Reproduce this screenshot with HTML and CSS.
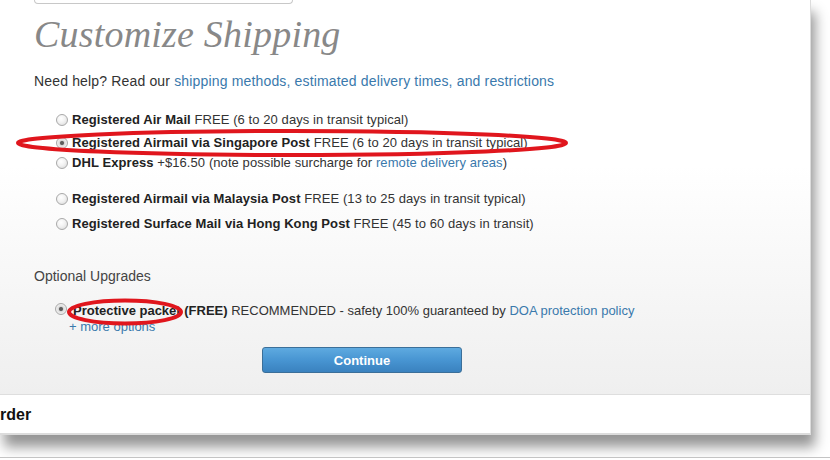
FILE: index.html
```html
<!DOCTYPE html>
<html>
<head>
<meta charset="utf-8">
<link rel="stylesheet" href="styles.css">
</head>
<body>
<div class="page">
  <div class="panel">
    <div class="main">
      <div class="topbox"></div>
      <h1 class="title">Customize Shipping</h1>
      <p class="help">Need help? Read our <a class="link" href="#">shipping methods, estimated delivery times, and restrictions</a></p>
      <div class="options">
        <label class="opt r1"><input type="radio" name="ship"><span><b>Registered Air Mail</b> FREE (6 to 20 days in transit typical)</span></label>
        <label class="opt r2"><input type="radio" name="ship" checked><span><b>Registered Airmail via Singapore Post</b> FREE (6 to 20 days in transit typical)</span></label>
        <label class="opt r3"><input type="radio" name="ship"><span><b>DHL Express</b> +$16.50 (note possible surcharge for <a class="link" href="#">remote delivery areas</a>)</span></label>
        <label class="opt r4"><input type="radio" name="ship"><span><b>Registered Airmail via Malaysia Post</b> FREE (13 to 25 days in transit typical)</span></label>
        <label class="opt r5"><input type="radio" name="ship"><span><b>Registered Surface Mail via Hong Kong Post</b> FREE (45 to 60 days in transit)</span></label>
      </div>
      <p class="subhead">Optional Upgrades</p>
      <div class="upgrade">
        <label class="opt up"><input type="radio" name="up" checked><span><b>Protective packet (FREE)</b> RECOMMENDED - safety 100% guaranteed by <a class="link" href="#">DOA protection policy</a></span></label>
        <a class="more link" href="#">+ more options</a>
      </div>
      <button class="btn" type="button">Continue</button>
    </div>
    <div class="footer">rder</div>
  </div>
  <svg class="mark mark1" width="570" height="40" viewBox="0 0 570 40"><ellipse cx="292" cy="19" rx="274" ry="12" fill="none" stroke="#e0161d" stroke-width="4"/></svg>
  <svg class="mark mark2" width="130" height="34" viewBox="0 0 130 34"><ellipse cx="65" cy="17" rx="56" ry="11.5" fill="none" stroke="#e0161d" stroke-width="4"/></svg>
</div>
</body>
</html>
```

FILE: styles.css
```css
html, body {
  margin: 0;
  padding: 0;
  background: #fff;
}
body {
  font-family: "Liberation Sans", Arial, sans-serif;
  color: #333;
}
.page {
  position: relative;
  width: 830px;
  height: 457px;
  border-bottom: 1px solid #c4c4c4;
  overflow: hidden;
}
.panel {
  width: 811px;
  box-sizing: border-box;
  border-right: 1px solid #dcdcdc;
  border-bottom: 2px solid #dcdcdc;
  background: #fff;
  box-shadow: 4px 12px 12px rgba(0, 0, 0, 0.42);
}
.main {
  padding: 0 0 21px 34px;
  border-bottom: 1px solid #dedede;
  background: linear-gradient(to bottom, #ffffff 0%, #ffffff 42%, #efefef 100%);
}
.topbox {
  width: 257px;
  height: 3px;
  border: 1px solid #c8c8c8;
  border-top: none;
  border-radius: 0 0 5px 5px;
}
.title {
  margin: 10px 0 0;
  font-family: "Liberation Serif", Georgia, serif;
  font-style: italic;
  font-weight: normal;
  font-size: 38px;
  line-height: 40px;
  color: #888;
  letter-spacing: 0.2px;
}
.help {
  margin: 18px 0 0;
  font-size: 14px;
  line-height: 18px;
  letter-spacing: 0.16px;
}
.link {
  color: #3a79ac;
  text-decoration: none;
}
.options {
  margin-top: 20px;
  padding-left: 22px;
}
.opt {
  display: flex;
  align-items: center;
  font-size: 13px;
  line-height: 20px;
  letter-spacing: 0.08px;
}
.opt b {
  font-weight: bold;
  color: #222;
}
.opt input {
  appearance: none;
  -webkit-appearance: none;
  width: 12px;
  height: 12px;
  margin: 0 4px 0 0;
  border: 1px solid #a9a9a9;
  border-radius: 50%;
  background: radial-gradient(circle at 40% 35%, #ffffff 0%, #f2f2f2 45%, #d6d6d6 100%);
  box-sizing: border-box;
  flex: none;
  position: relative;
}
.opt input:checked {
  background: radial-gradient(circle at 50% 50%, #555 0, #666 1.6px, #dcdcdc 2.6px, #f0f0f0 70%, #d4d4d4 100%);
}
.r2 { margin-top: 3px; }
.r4 { margin-top: 16px; }
.r5 { margin-top: 5px; }
.subhead {
  margin: 33px 0 0;
  font-size: 14px;
  line-height: 18px;
  color: #444;
}
.upgrade {
  margin-top: 17px;
  padding-left: 21px;
}
.up {
  line-height: 18px;
  align-items: flex-start;
  letter-spacing: 0;
}
.up input {
  margin-top: 1px;
  margin-right: 6px;
}
.more {
  display: block;
  margin-left: 14px;
  font-size: 13px;
  line-height: 14px;
}
.btn {
  display: block;
  margin: 13px 0 0 228px;
  width: 200px;
  height: 26px;
  padding: 0;
  border: 1px solid #3b6f99;
  border-radius: 3px;
  background: linear-gradient(to bottom, #5eaae0 0%, #4895d2 50%, #3a82bf 100%);
  color: #fff;
  font-family: "Liberation Sans", Arial, sans-serif;
  font-weight: bold;
  font-size: 13px;
}
.footer {
  height: 37px;
  padding-top: 1px;
  line-height: 37px;
  font-size: 16px;
  font-weight: bold;
  color: #111;
  background: #fff;
}
.mark {
  position: absolute;
}
.mark1 {
  left: 0;
  top: 124px;
}
.mark2 {
  left: 60px;
  top: 295px;
}
```
